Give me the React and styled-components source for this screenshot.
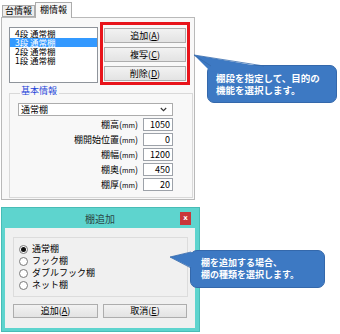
import React from 'react';
import styled, { createGlobalStyle } from 'styled-components';

const Global = createGlobalStyle`
  html, body { margin: 0; padding: 0; background: #ffffff; }
  body { font-family: "Noto Sans CJK JP", "Noto Sans", sans-serif; color: #000; }
  * { box-sizing: border-box; }
`;

const Stage = styled.div`
  position: relative;
  width: 340px;
  height: 334px;
  overflow: hidden;
  background: #ffffff;
  display: flex;
  flex-direction: column;
  padding-left: 1px;
`;

const TabStrip = styled.div`
  display: flex;
  align-items: flex-end;
  height: 17px;
  padding-left: 1px;
  position: relative;
  z-index: 1;
`;

const Tab = styled.div`
  width: ${p => p.$w}px;
  height: ${p => (p.$active ? 16 : 12)}px;
  margin-bottom: ${p => (p.$active ? -1 : 0)}px;
  border: 1px solid #acacac;
  border-bottom: ${p => (p.$active ? 'none' : '1px solid #acacac')};
  background: ${p => (p.$active ? '#f8f8f8' : '#ececec')};
  font-size: 9px;
  line-height: 10px;
  display: flex;
  align-items: center;
  justify-content: center;
  padding-bottom: ${p => (p.$active ? 1 : 0)}px;
`;

const Panel = styled.div`
  width: 194px;
  height: 183px;
  border: 1px solid #b9b9b9;
  background: #f8f8f8;
  display: flex;
  flex-direction: column;
  padding-top: 4px;
`;

const TopRow = styled.div`
  display: flex;
  align-items: flex-start;
  gap: 2px;
  padding-left: 7px;
`;

const ListBox = styled.div`
  margin-top: 5px;
  width: 89px;
  height: 56px;
  background: #ffffff;
  border: 1px solid #8f949b;
  padding-top: 1px;
  display: flex;
  flex-direction: column;
`;

const ListItem = styled.div`
  height: 9px;
  line-height: 9px;
  font-size: 8.5px;
  padding-left: 5px;
  white-space: pre;
  background: ${p => (p.$selected ? '#3399ff' : 'transparent')};
  color: ${p => (p.$selected ? '#ffffff' : '#000000')};
`;

const Highlight = styled.div`
  width: 90px;
  height: 63px;
  border: 3px solid #e8141b;
  padding: 3px 1px 0 1px;
  display: flex;
  flex-direction: column;
  gap: 4px;
`;

const Button = styled.div`
  height: ${p => p.$h || 15}px;
  border: 1px solid #adadad;
  background: linear-gradient(#f2f2f2, #e3e3e3);
  font-size: 9px;
  line-height: 10px;
  display: flex;
  align-items: center;
  justify-content: center;
  white-space: nowrap;
`;

const Mnemonic = styled.span`
  text-decoration: underline;
  text-underline-offset: 1px;
`;

const Frame = styled.fieldset`
  margin: 1px 0 0 7px;
  width: 184px;
  border: 1px solid #d9d9d9;
  padding: 0 19px 6px 8px;
  min-width: 0;
`;

const Legend = styled.legend`
  font-size: 9px;
  line-height: 10px;
  color: #1d44d8;
  padding: 0 2px 4px 1px;
  margin-left: 2px;
`;

const Select = styled.div`
  margin-top: 3px;
  height: 13px;
  background: #ffffff;
  border: 1px solid #acacac;
  font-size: 9px;
  line-height: 11px;
  padding: 0 5px 0 2px;
  display: flex;
  align-items: center;
  justify-content: space-between;
`;

const FieldGrid = styled.div`
  margin-top: 2px;
  display: grid;
  grid-template-columns: 1fr 30px;
  grid-auto-rows: 13px;
  column-gap: 5px;
  row-gap: 2px;
`;

const FieldLabel = styled.div`
  font-size: 9px;
  line-height: 13px;
  text-align: right;
  white-space: nowrap;
`;

const Unit = styled.span`
  font-size: 7px;
`;

const FieldInput = styled.div`
  background: #ffffff;
  border: 1px solid #9da2a9;
  font-size: 9px;
  line-height: 11px;
  text-align: right;
  padding-right: 2px;
`;

const Dialog = styled.div`
  margin-top: 7px;
  width: 199px;
  height: 125px;
  background: #5ed4ce;
  border: 1px solid #48bcb6;
  padding: 0 4px 3px 3px;
  display: flex;
  flex-direction: column;
`;

const TitleBar = styled.div`
  height: 20px;
  display: grid;
  grid-template-columns: 1fr auto 1fr;
  align-items: start;
  padding-top: 4px;
`;

const Title = styled.div`
  grid-column: 2;
  font-size: 10px;
  line-height: 13px;
  color: #2c4646;
`;

const CloseBox = styled.div`
  grid-column: 3;
  justify-self: end;
  margin-right: 4px;
  width: 11px;
  height: 13px;
  background: #c9363a;
  color: #ffffff;
  font-family: "DejaVu Sans", sans-serif;
  font-size: 7px;
  font-weight: 700;
  line-height: 13px;
  text-align: center;
`;

const Client = styled.div`
  height: 100px;
  background: #f0f0f0;
  padding: 9px 7px 0 8px;
  display: flex;
  flex-direction: column;
`;

const RadioGroup = styled.div`
  height: 60px;
  border: 1px solid #dcdcdc;
  padding: 5px 0 0 5px;
  display: flex;
  flex-direction: column;
`;

const RadioRow = styled.div`
  height: 12px;
  display: flex;
  align-items: center;
  gap: 4px;
  font-size: 9px;
  line-height: 12px;
`;

const RadioCircle = styled.span`
  width: 9px;
  height: 9px;
  border-radius: 50%;
  border: 1px solid #7a7a7a;
  background: #ffffff;
  display: flex;
  align-items: center;
  justify-content: center;
  &::after {
    content: '';
    width: 5px;
    height: 5px;
    border-radius: 50%;
    background: ${p => (p.$checked ? '#111' : 'transparent')};
  }
`;

const ButtonRow = styled.div`
  margin-top: 7px;
  display: grid;
  grid-template-columns: 85px 84px;
  gap: 5px;
`;

const Callout = styled.div`
  position: absolute;
  left: ${p => p.$x}px;
  top: ${p => p.$y}px;
  width: ${p => p.$w}px;
  height: ${p => p.$h}px;
  background: #3d79c3;
  border: 1px solid #3468ab;
  border-radius: 7px;
  color: #ffffff;
  font-size: ${p => p.$fs}px;
  font-weight: 700;
  line-height: ${p => p.$lh}px;
  padding-left: ${p => p.$pl}px;
  display: flex;
  flex-direction: column;
  justify-content: center;
  z-index: 5;
`;

const CalloutText = styled.div`
  position: relative;
  white-space: nowrap;
`;

const Wedge = styled.svg`
  position: absolute;
  left: 0;
  top: 0;
  width: 1px;
  height: 1px;
  overflow: visible;
`;

const Chevron = () => (
  <svg width="7" height="5" viewBox="0 0 7 5">
    <polyline points="0.8,1 3.5,3.7 6.2,1" fill="none" stroke="#333" strokeWidth="1.1" />
  </svg>
);

const listItems = ['4段 通常棚', '3段 通常棚', '2段 通常棚', '1段 通常棚'];
const fields = [
  ['棚高', '1050'],
  ['棚開始位置', '0'],
  ['棚幅', '1200'],
  ['棚奥', '450'],
  ['棚厚', '20'],
];
const radios = ['通常棚', 'フック棚', 'ダブルフック棚', 'ネット棚'];

const Label = ({ text, m }) => (
  <span>
    {text}(<Mnemonic>{m}</Mnemonic>)
  </span>
);

export default function App() {
  return (
    <Stage>
      <Global />
      <TabStrip>
        <Tab $w={33}>台情報</Tab>
        <Tab $w={37} $active>棚情報</Tab>
      </TabStrip>
      <Panel>
        <TopRow>
          <ListBox>
            {listItems.map((t, i) => (
              <ListItem key={t} $selected={i === 1}>{t}</ListItem>
            ))}
          </ListBox>
          <Highlight>
            <Button><Label text="追加" m="A" /></Button>
            <Button><Label text="複写" m="C" /></Button>
            <Button><Label text="削除" m="D" /></Button>
          </Highlight>
        </TopRow>
        <Frame>
          <Legend>基本情報</Legend>
          <Select>
            <span>通常棚</span>
            <Chevron />
          </Select>
          <FieldGrid>
            {fields.map(([name, val]) => (
              <React.Fragment key={name}>
                <FieldLabel>{name}(<Unit>mm</Unit>)</FieldLabel>
                <FieldInput>{val}</FieldInput>
              </React.Fragment>
            ))}
          </FieldGrid>
        </Frame>
      </Panel>

      <Dialog>
        <TitleBar>
          <Title>棚追加</Title>
          <CloseBox>x</CloseBox>
        </TitleBar>
        <Client>
          <RadioGroup>
            {radios.map((r, i) => (
              <RadioRow key={r}>
                <RadioCircle $checked={i === 0} />
                <span>{r}</span>
              </RadioRow>
            ))}
          </RadioGroup>
          <ButtonRow>
            <Button $h={14}><Label text="追加" m="A" /></Button>
            <Button $h={14}><Label text="取消" m="E" /></Button>
          </ButtonRow>
        </Client>
      </Dialog>

      <Callout $x={207} $y={65} $w={130} $h={38} $fs={9.5} $lh={12} $pl={8}>
        <Wedge>
          <polygon points="-14,-11 3,6 56,1" fill="#3d79c3" />
          <polyline points="3,0 -14,-11 56,0" fill="none" stroke="#3468ab" strokeWidth="0.8" />
        </Wedge>
        <CalloutText>棚段を指定して、目的の</CalloutText>
        <CalloutText>機能を選択します。</CalloutText>
      </Callout>

      <Callout $x={190} $y={250} $w={135} $h={38} $fs={9} $lh={12} $pl={10}>
        <Wedge>
          <polygon points="-21,6 1,1 1,17" fill="#3d79c3" />
          <polyline points="0,1 -21,6 0,17" fill="none" stroke="#3468ab" strokeWidth="0.8" />
        </Wedge>
        <CalloutText>棚を追加する場合、</CalloutText>
        <CalloutText>棚の種類を選択します。</CalloutText>
      </Callout>
    </Stage>
  );
}
